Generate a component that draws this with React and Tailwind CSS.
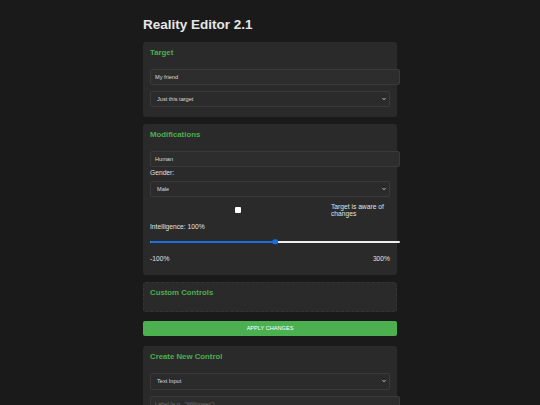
import { useState } from 'react';

const inputCls =
  'block w-[250px] h-[15.5px] px-[4px] bg-[#2d2d2d] border border-[#3a3a3a] rounded-[2px] text-[5.6px] text-[#dcdcdc] placeholder:text-[#6f6f6f] outline-none';

function Chevron() {
  return (
    <svg
      className="absolute right-[4px] top-1/2 -translate-y-1/2 pointer-events-none"
      width="4"
      height="3"
      viewBox="0 0 4 3"
    >
      <polyline points="0.5,0.6 2,2.2 3.5,0.6" fill="none" stroke="#d8d8d8" strokeWidth="0.9" />
    </svg>
  );
}

function Select({ value, options }) {
  return (
    <div className="relative w-full">
      <select
        defaultValue={value}
        className="block w-full h-[16.5px] pl-[6px] pr-[10px] appearance-none bg-[#2b2b2b] border border-[#3a3a3a] rounded-[2px] text-[5.6px] text-[#dcdcdc] outline-none"
      >
        {options.map((o) => (
          <option key={o}>{o}</option>
        ))}
      </select>
      <Chevron />
    </div>
  );
}

function Card({ title, dashed, className = '', children }) {
  return (
    <section
      className={`px-[7px] pt-[6px] bg-[#2a2a2a] rounded-[3px] ${
        dashed ? 'border border-dashed border-[#343434]' : ''
      } ${className}`}
    >
      <h3 className={`text-[7.8px] leading-[10px] font-bold text-[#4caf50] ${dashed ? 'ml-[-1px] mt-[-1px]' : ''}`}>
        {title}
      </h3>
      {children}
    </section>
  );
}

function Slider({ value, min, max }) {
  const pct = ((value - min) / (max - min)) * 100;
  return (
    <div className="relative w-[250px] h-[10px] flex items-center" role="slider" aria-valuenow={value}>
      <div className="w-full h-[2.7px] rounded-full bg-[#efefef] overflow-hidden">
        <div className="h-full bg-[#1a6fe0]" style={{ width: `${pct}%` }} />
      </div>
      <div
        className="absolute top-1/2 w-[5.5px] h-[5.5px] -translate-x-1/2 -translate-y-1/2 rounded-full bg-[#1a6fe0]"
        style={{ left: `${pct}%` }}
      />
    </div>
  );
}

export default function App() {
  const [aware, setAware] = useState(false);

  return (
    <div className="min-h-screen bg-[#1a1a1a] font-['Liberation_Sans',Arial,sans-serif] text-[#e0e0e0]">
      <div className="w-[254px] mx-auto pt-[17px] pb-8">
        <h1 className="text-[13.5px] leading-[16px] font-bold text-[#e6e6e6] mb-[9px]">
          Reality Editor 2.1
        </h1>

        <Card title="Target" className="pb-[10px]">
          <input className={`${inputCls} mt-[11px]`} defaultValue="My friend" />
          <div className="mt-[6px]">
            <Select value="Just this target" options={['Just this target', 'Everyone nearby', 'Everyone']} />
          </div>
        </Card>

        <Card title="Modifications" className="mt-[7px] pb-[12px]">
          <input className={`${inputCls} mt-[11px]`} defaultValue="Human" />
          <label className="block mt-[2.5px] text-[6.7px] leading-[8px]">Gender:</label>
          <div className="mt-[3.5px]">
            <Select value="Male" options={['Male', 'Female', 'Other']} />
          </div>
          <label className="mt-[5.5px] flex items-center text-[6.7px] leading-[7.7px]">
            <span className="flex-1 flex justify-center">
              <input
                type="checkbox"
                checked={aware}
                onChange={() => setAware(!aware)}
                className="appearance-none w-[6px] h-[6px] bg-white rounded-[1px]"
              />
            </span>
            <span className="w-[59px] ml-[5px]">Target is aware of changes</span>
          </label>
          <div className="mt-[5px] text-[6.7px] leading-[8px]">Intelligence: 100%</div>
          <div className="mt-[6px]">
            <Slider value={100} min={-100} max={300} />
          </div>
          <div className="mt-[8px] flex justify-between text-[6.7px] leading-[8px]">
            <span>-100%</span>
            <span>300%</span>
          </div>
        </Card>

        <Card title="Custom Controls" dashed className="mt-[7px] h-[30px]" />

        <button className="mt-[9px] w-full h-[14.7px] bg-[#4caf50] rounded-[2px] text-[5.6px] text-white">
          APPLY CHANGES
        </button>

        <Card title="Create New Control" className="mt-[9px] pb-[10px]">
          <div className="mt-[11px]">
            <Select value="Text Input" options={['Text Input', 'Slider', 'Checkbox', 'Dropdown']} />
          </div>
          <input className={`${inputCls} mt-[6.5px]`} placeholder={'Label (e.g., "Willpower")'} />
          <input className={`${inputCls} mt-[6.5px]`} placeholder="Default value" />
        </Card>
      </div>
    </div>
  );
}
